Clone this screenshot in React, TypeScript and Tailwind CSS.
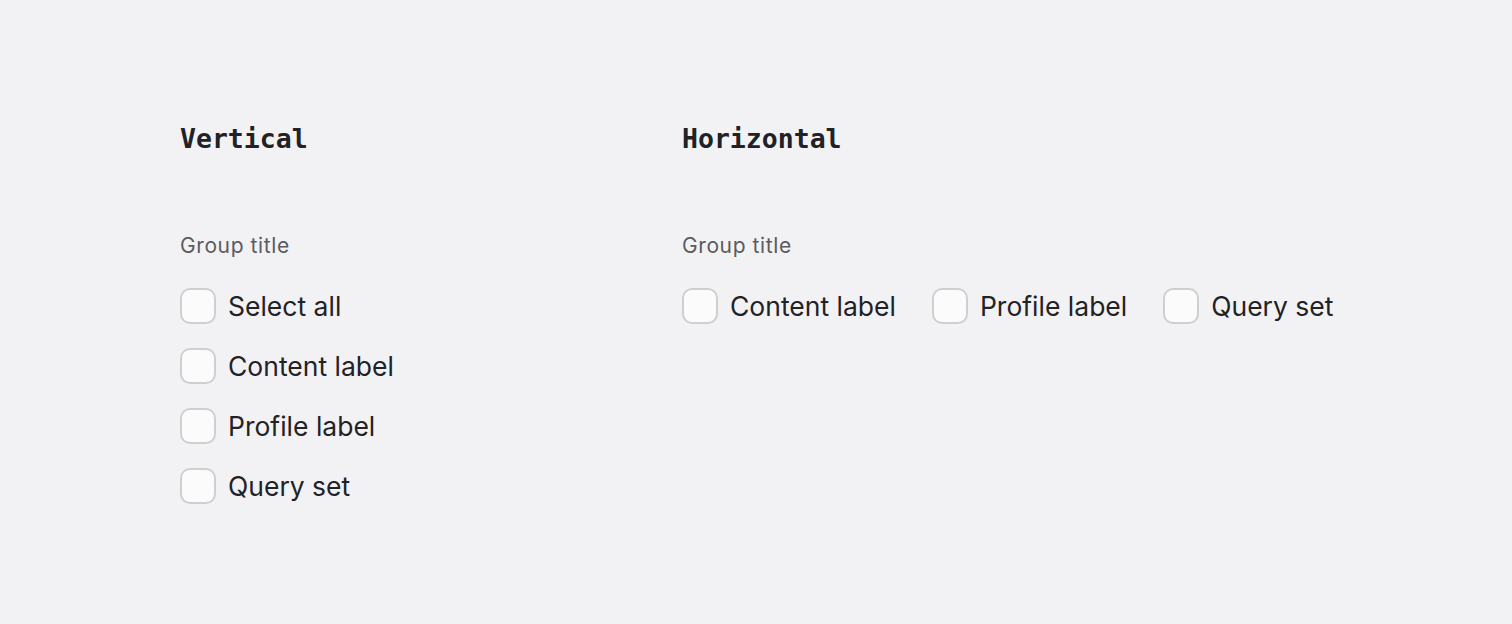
import React from 'react';

const sans = { fontFamily: 'Inter, "Noto Sans", sans-serif' };
const mono = { fontFamily: '"DejaVu Sans Mono", "Liberation Mono", monospace' };

function Box() {
    return <span className="block w-[36px] h-[36px] rounded-[10px] border-2 border-[#cfcfd1] bg-[#fbfbfc] shrink-0" />;
}

function Item({ label }: { label: string }) {
    return (
        <label className="flex items-center gap-3">
            <Box />
            <span className="text-[26.5px] leading-[36px] text-[#222226]">{label}</span>
        </label>
    );
}

export default function App() {
    return (
        <div className="min-h-screen bg-[#f2f2f4] pt-[122px] pl-[180px]" style={sans}>
            <div className="flex">
                {/* Vertical */}
                <div className="w-[502px]">
                    <h2 className="text-[26.5px] leading-[34px] font-bold text-[#222226]" style={mono}>Vertical</h2>
                    <div className="mt-[76px] text-[21px] leading-[28px] tracking-[0.6px] text-[#5b5b60]">Group title</div>
                    <div className="mt-[28px] flex flex-col gap-6">
                        <Item label="Select all" />
                        <Item label="Content label" />
                        <Item label="Profile label" />
                        <Item label="Query set" />
                    </div>
                </div>

                {/* Horizontal */}
                <div>
                    <h2 className="text-[26.5px] leading-[34px] font-bold text-[#222226]" style={mono}>Horizontal</h2>
                    <div className="mt-[76px] text-[21px] leading-[28px] tracking-[0.6px] text-[#5b5b60]">Group title</div>
                    <div className="mt-[28px] flex gap-9">
                        <Item label="Content label" />
                        <Item label="Profile label" />
                        <Item label="Query set" />
                    </div>
                </div>
            </div>
        </div>
    );
}
